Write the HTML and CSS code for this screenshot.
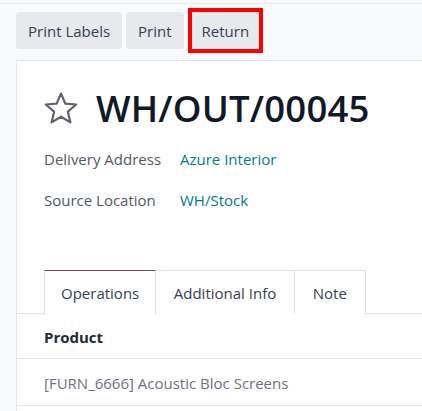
FILE: index.html
```html
<!DOCTYPE html>
<html>
<head>
<meta charset="utf-8">
<link rel="stylesheet" href="styles.css">
</head>
<body>
<div class="page">
  <div class="toolbar">
    <button class="btn">Print Labels</button>
    <button class="btn">Print</button>
    <button class="btn btn-hl">Return</button>
  </div>
  <div class="sheet">
    <div class="title-row">
      <svg class="star" width="36" height="34" viewBox="0 0 36 34">
        <polygon points="18,2.5 22.3,12.6 33.2,13.5 24.9,20.7 27.4,31.4 18,25.7 8.6,31.4 11.1,20.7 2.8,13.5 13.7,12.6" fill="none" stroke="#5f636e" stroke-width="2.2" stroke-linejoin="round"/>
      </svg>
      <h1 class="title">WH/OUT/00045</h1>
    </div>
    <div class="fields">
      <div class="field"><span class="label">Delivery Address</span><span class="value">Azure Interior</span></div>
      <div class="field"><span class="label">Source Location</span><span class="value">WH/Stock</span></div>
    </div>
    <div class="tabs">
      <div class="tab active">Operations</div>
      <div class="tab tab-info">Additional Info</div>
      <div class="tab tab-note">Note</div>
    </div>
    <div class="table">
      <div class="th">Product</div>
      <div class="td">[FURN_6666] Acoustic Bloc Screens</div>
    </div>
  </div>
</div>
</body>
</html>
```
FILE: styles.css
```css
html, body {
  margin: 0;
  padding: 0;
  background: #f9fafb;
}
body {
  font-family: "Open Sans", "Liberation Sans", sans-serif;
  color: #1f2937;
}
.page {
  border-top: 1px solid #e7e9ed;
  margin-top: 3px;
  padding-left: 16px;
  overflow: hidden;
  height: 407px;
}
.toolbar {
  display: flex;
  gap: 4px;
  padding-top: 8px;
  height: 45px;
  align-items: flex-start;
}
.btn {
  font-family: "Open Sans", "Liberation Sans", sans-serif;
  font-size: 15px;
  color: #374151;
  background: #e7e9ed;
  border: none;
  border-radius: 4px;
  height: 37px;
  padding: 0 12px;
  margin: 0;
  font-weight: 500;
}
.btn-hl {
  outline: 4px solid #ff0000;
  outline-offset: 0;
  border-radius: 0;
  margin-left: 4px;
  padding: 0 10px;
}
.sheet {
  background: #ffffff;
  border-left: 1px solid #e3e6ea;
  border-top: 1px solid #e3e6ea;
  margin-top: 3px;
  height: 400px;
}
.title-row {
  display: flex;
  align-items: center;
  padding: 24px 0 0 26px;
  height: 46px;
}
.star {
  display: block;
  margin-right: 17px;
}
.title {
  margin: 0;
  font-size: 36.5px;
  font-weight: 600;
  color: #111827;
  letter-spacing: 0.2px;
  line-height: 46px;
}
.fields {
  padding: 7px 0 0 27px;
}
.field {
  display: flex;
  height: 41px;
  align-items: center;
  font-size: 15px;
}
.label {
  width: 136px;
  color: #525a66;
  font-weight: 500;
}
.value {
  color: #017e84;
}
.tabs {
  display: flex;
  margin-top: 50px;
  padding-left: 27px;
  border-bottom: 1px solid #dee2e6;
  height: 43px;
}
.tab {
  display: flex;
  align-items: center;
  justify-content: center;
  font-size: 15px;
  color: #374151;
  border: 1px solid #dee2e6;
  border-bottom: none;
  border-left: none;
  padding: 0 16px;
  margin-bottom: -1px;
  background: #fff;
}
.tab-info {
  padding: 0 17.5px;
}
.tab-note {
  padding: 0 18px;
}
.tab.active {
  border-top: 1px solid #714b67;
  border-left: 1px solid #dee2e6;
  height: 44px;
}
.th {
  padding-left: 27px;
  height: 44px;
  line-height: 46px;
  font-size: 15px;
  font-weight: 700;
  color: #1f2937;
  border-bottom: 1px solid #e4e6ea;
}
.td {
  padding-left: 27px;
  height: 46px;
  line-height: 48px;
  font-size: 15px;
  color: #6b7280;
  border-bottom: 1px solid #e4e6ea;
}
```
